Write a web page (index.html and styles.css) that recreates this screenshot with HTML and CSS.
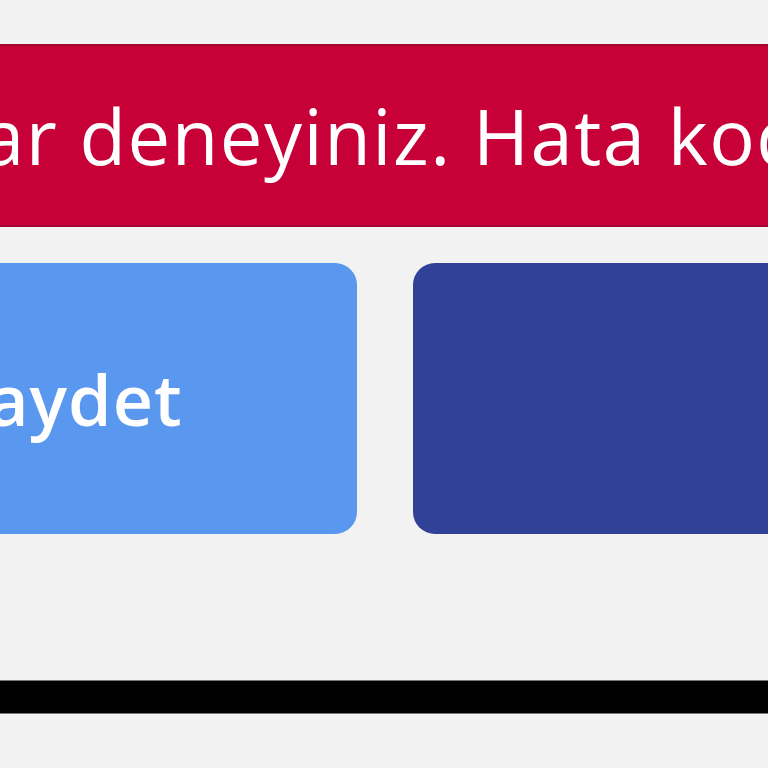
FILE: index.html
```html
<!DOCTYPE html>
<html lang="tr">
<head>
   <meta charset="utf-8" />
   <title>Kayıt</title>
   <link rel="stylesheet" href="styles.css">
</head>
<body>
   <div class="stage">
      <div class="alert">
         <p class="alert-text"><span class="alert-lead">Kayıt sırasında bir sorun oluştu, lütfen daha sonra tekr</span>ar deneyiniz. Hata kodu: 500</p>
      </div>
      <div class="actions">
         <button class="btn btn-save" type="submit">Kaydet</button>
         <button class="btn btn-cancel" type="button">Vazgeç</button>
      </div>
      <hr class="rule" />
   </div>
</body>
</html>
```

FILE: styles.css
```css
html, body { margin: 0; background: #f2f2f2; overflow: hidden; }

body { font-family: "Open Sans", "Liberation Sans", sans-serif; }

.stage { width: 1240px; margin-left: -232px; padding-top: 44px; }

.alert { height: 183px; box-sizing: border-box; background: #c70038; border-top: 2px solid #a3062f; border-bottom: 2px solid #a3062f; display: flex; align-items: center; overflow: hidden; }

.alert-text { margin: 0 0 0 214px; white-space: nowrap; color: #fff; font-size: 76px; letter-spacing: 1.5px; }

/* the start of the sentence hangs off to the left */
.alert-lead { display: inline-block; width: 0; direction: rtl; }

.actions { display: flex; gap: 56px; margin-top: 36px; }

.btn { width: 589px; height: 271px; border: none; border-radius: 22px; color: #fff; font-family: inherit; font-size: 70px; font-weight: 600; letter-spacing: 1px; }

.btn-save { background: #5a98f0; }

.btn-cancel { background: #304197; color: #304197; }

.rule { height: 34px; margin: 146px 0 0; border: none; border-top: 1px solid #777; border-bottom: 1px solid #777; background: #000; box-sizing: border-box; }
```
